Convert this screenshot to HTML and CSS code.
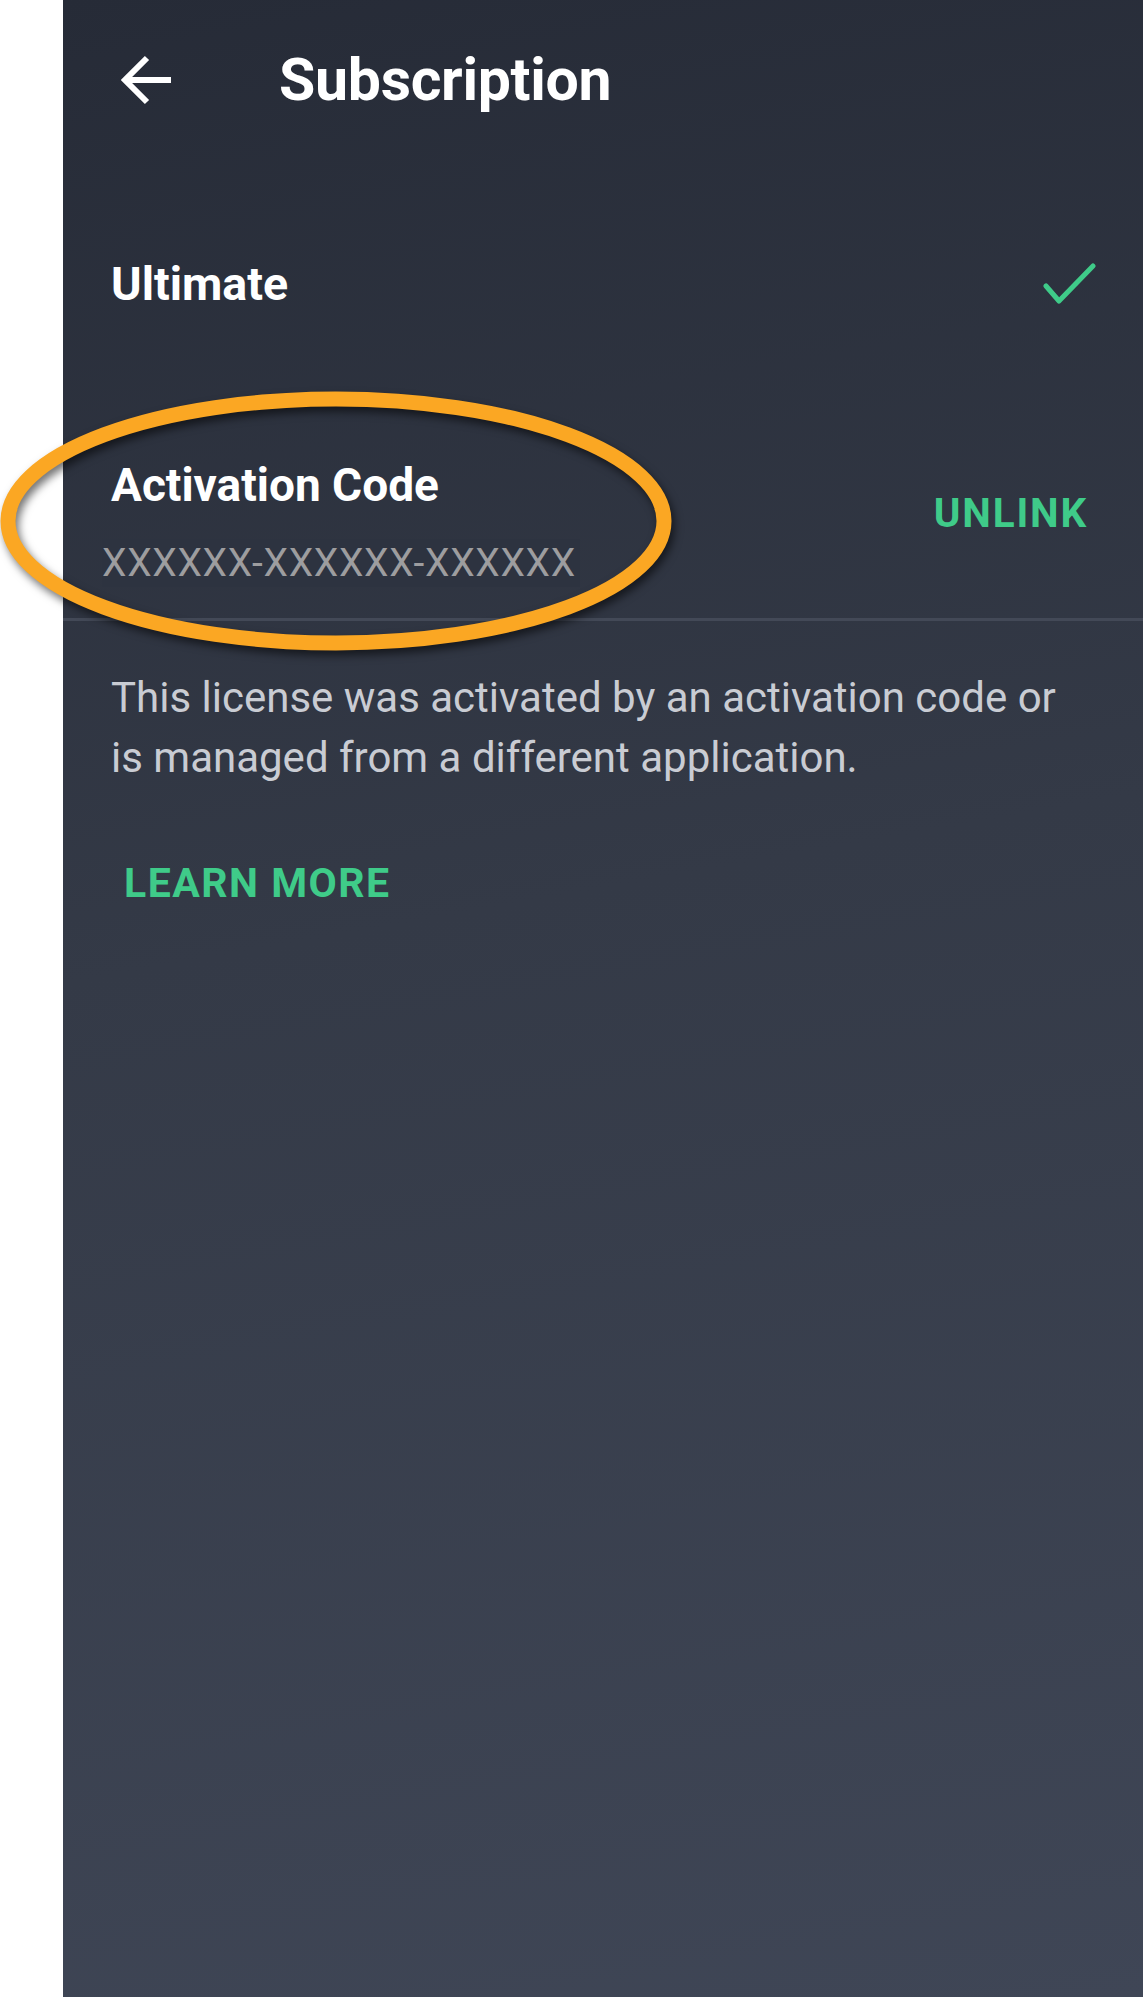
FILE: index.html
```html
<!DOCTYPE html>
<html lang="en">
<head>
    <meta charset="UTF-8">
    <meta name="viewport" content="width=device-width, initial-scale=1.0">
    <title>Subscription</title>
    <link rel="stylesheet" href="styles.css">
</head>
<body>
    <div class="page">
        <div class="screen">
            <header class="toolbar">
                <button class="back" aria-label="Back">
                    <svg width="52" height="52" viewBox="0 0 52 52">
                        <path d="M26 5 L4 27 L26 49 M4 27 H50" fill="none" stroke="#fff" stroke-width="6" stroke-linecap="butt" stroke-linejoin="miter"/>
                    </svg>
                </button>
                <h1>Subscription</h1>
            </header>

            <div class="row plan">
                <span class="plan-name">Ultimate</span>
                <svg class="check" width="56" height="44" viewBox="0 0 56 44">
                    <path d="M4 23 L17 38 L51 3" fill="none" stroke="#3fcb89" stroke-width="5" stroke-linecap="round" stroke-linejoin="round"/>
                </svg>
            </div>

            <div class="row code-row">
                <div class="code-info">
                    <div class="code-title">Activation Code</div>
                    <div class="code-value">XXXXXX-XXXXXX-XXXXXX</div>
                </div>
                <a class="link unlink" href="#">UNLINK</a>
            </div>

            <p class="note">This license was activated by an activation code or is managed from a different application.</p>

            <a class="link learn" href="#">LEARN MORE</a>
        </div>

        <svg class="mark" width="680" height="272" viewBox="0 0 680 272">
            <ellipse cx="336" cy="130" rx="328" ry="122" fill="none" stroke="#fba723" stroke-width="15"/>
        </svg>
    </div>
</body>
</html>
```

FILE: styles.css
```css
* { box-sizing: border-box; }
body { margin: 0; background: #fff; font-family: Roboto, "Noto Sans", sans-serif; }
.page { position: relative; }
.screen { margin-left: 63px; min-height: 1997px; padding: 0 55px 0 48px; background: linear-gradient(170deg, #262b37 0%, #343a47 45%, #3f4656 100%); color: #fff; }

.toolbar { display: flex; align-items: center; height: 158px; }
.back { background: none; border: 0; padding: 0; margin-left: 10px; width: 52px; height: 52px; display: flex; }
.toolbar h1 { margin: 0 0 0 106px; font-size: 59px; font-weight: 700; letter-spacing: -0.3px; }

.row { display: flex; justify-content: space-between; }
.plan { height: 252px; align-items: center; }
.plan-name { font-size: 46.5px; font-weight: 700; line-height: 56px; }
.check { margin-right: -10px; margin-top: 2px; }

.code-row { align-items: flex-start; padding: 47px 55px 31px 48px; margin: 0 -55px 0 -48px; border-bottom: 3px solid #434957; }
.code-title { font-size: 46px; font-weight: 700; line-height: 56px; }
.code-value { margin: 26px 0 0 -9px; font-size: 39px; line-height: 48px; color: #9d9d9f; letter-spacing: 0.7px; background: #2d3340; width: 478px; }
.link { color: #3fcb89; font-weight: 700; text-decoration: none; letter-spacing: 1.5px; }
.unlink { margin-top: 32px; font-size: 40.5px; line-height: 48px; letter-spacing: 1.8px; }

.note { margin: 47px 30px 0 0; font-size: 42px; line-height: 60px; color: #c9ccd3; }
.learn { display: inline-block; margin: 71px 0 0 13px; font-size: 41px; line-height: 48px; }

.mark { position: absolute; left: 0; top: 391px; filter: drop-shadow(3px 5px 4px rgba(0, 0, 0, 0.55)); }
```
